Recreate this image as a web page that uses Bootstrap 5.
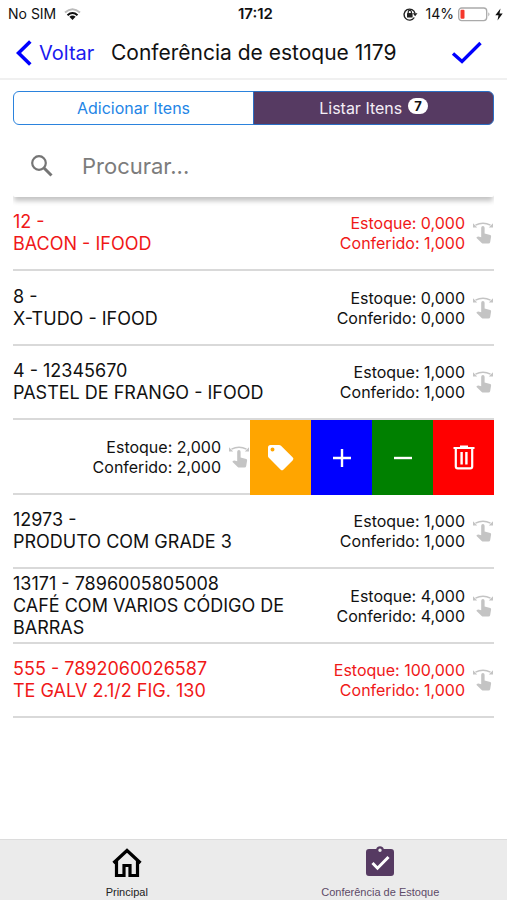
<!DOCTYPE html>
<html lang="pt-BR">
<head>
<meta charset="utf-8">
<meta name="viewport" content="width=device-width, initial-scale=1">
<title>Conferência de estoque</title>
<link href="https://cdn.jsdelivr.net/npm/bootstrap@5.3.0/dist/css/bootstrap.min.css" rel="stylesheet">
<style>
  body { font-family: Inter, "Liberation Sans", sans-serif; color: #111; background: #fff; }
  svg { display: block; flex: none; }
  .status-bar { height: 28px; font-size: 14px; line-height: 28px; padding: 0 4px 0 8px; }
  .status-bar > * { flex: 1 1 0; }
  .clock { font-weight: 600; font-size: 15px; }
  .title-bar { height: 52px; padding: 0 24px 0 16px; border-bottom: 2px solid #f0f0f0; }
  .title-bar a { color: #1a1aef; font-size: 20px; width: 95px; gap: 7px; }
  .title-bar h1 { font-size: 21px; line-height: 28px; font-weight: 400; }
  .title-bar button { color: #00f; }
  .content { padding: 11px 13px 0; }
  .segments { height: 34px; }
  .segments .btn { font-size: 16px; line-height: 20px; padding: 0; flex: 1 1 0; border-color: #2b83dd; border-radius: 6px; color: #2385e6; }
  .segments .btn.active { background: #563a62; border-color: #2b6fc4; color: #f4eef6; }
  .segments .badge { font-size: 13px; line-height: 16px; padding: 0 6px; background: #fff; color: #111; top: -3px; margin-left: 6px; }
  .search-box { height: 72px; padding: 10px 16px 0; color: #757575; box-shadow: 0 5px 5px -1px #c4c4c4; clip-path: inset(0 0 -12px 0); border-radius: 2px; }
  .search-box input { font-size: 22px; line-height: 32px; margin-left: 27px; color: #333; outline: 0; min-width: 0; }
  .search-box input::placeholder { color: #7c7c7c; opacity: 1; }
  .stock-row { height: 74px; border-bottom: 2px solid #d9d9d9; }
  .stock-row:nth-child(even) { height: 75px; }
  .product { font-size: 18px; line-height: 22px; max-width: 290px; }
  .counts { font-size: 16px; line-height: 20px; margin-right: 7px; }
  .swipe-icon { color: #c4c4c4; }
  .different { color: #f01818; }
  .actions { margin-bottom: -2px; }
  .action { width: 61px; color: #fff; }
  .act-tag { background: #ffa500; }
  .act-plus { background: #00f; }
  .act-minus { background: #008000; }
  .act-trash { background: #f00; }
  .tab-bar { height: 61px; background: #ebebeb; border-top: 1px solid #dcdcdc; font-family: "Liberation Sans", sans-serif; font-size: 11px; line-height: 14px; }
  .tab-bar a { flex: 1 1 0; color: #222; padding-top: 5px; gap: 6px; }
  .tab-bar a.current { color: #5d4a68; }
</style>
</head>
<body class="d-flex flex-column min-vh-100">
<svg class="d-none" aria-hidden="true">
  <symbol id="swipe" viewBox="0 0 22 24">
    <path d="M3.5 4.2Q11 .2 18.500 4.200" fill="none" stroke="currentColor" stroke-width="1.500"/>
    <path d="M1 2.300V6.500H5.200ZM21 2.300V6.500H16.800Z" fill="currentColor"/>
    <path d="M9.200 6.700a1.700 1.700 0 0 1 3.400 0V12.400l5.600 1.600q1 .4.900 1.500l-.9 5.500q-.3 1.500-1.700 1.500h-5.400q-.8 0-1.400-.6L4.300 16.700l.8-.8q.5-.5 1.200-.3l2.900.6Z" fill="currentColor"/>
  </symbol>
</svg>

<div class="status-bar d-flex align-items-center">
  <div class="d-flex align-items-center gap-2">
    <span>No SIM</span>
    <svg width="17" height="13" viewBox="0 0 17 13" fill="none" stroke-width="2">
      <path d="M1 4.500Q8.500-2 16 4.500" stroke="#bbb"/><path d="M3.500 7.200Q8.500 2.800 13.500 7.200" stroke="#111"/><path d="M5.400 8.700Q8.500 6.200 11.600 8.700L8.500 12Z" fill="#111"/>
    </svg>
  </div>
  <div class="clock text-center">17:12</div>
  <div class="d-flex align-items-center justify-content-end">
    <svg class="me-2" width="15" height="14" viewBox="0 0 15 14">
      <path d="M11.300 10.500A5.500 5.500 0 1 1 12 6.500" fill="none" stroke="#222" stroke-width="1.400"/>
      <path d="M9.700 6.200h4.800L12.100 9.200Z" fill="#222"/><rect x="4" y="6" width="5.600" height="4.500" rx=".5" fill="#222"/><path d="M5.200 6V5a1.600 1.600 0 0 1 3.200 0v1" fill="none" stroke="#222" stroke-width="1.200"/>
    </svg>
    <span class="me-1">14%</span>
    <svg width="33" height="15" viewBox="0 0 33 15">
      <rect x=".7" y="1" width="28" height="12.600" rx="3" fill="#fff" stroke="#aaa" stroke-width="1.300"/><rect x="2.500" y="2.800" width="4" height="9" rx="1" fill="#f5372c"/><path d="M30.300 5.200q2.400 2 0 4.200Z" fill="#aaa"/>
    </svg>
    <svg class="ms-1" width="8" height="13" viewBox="0 0 8 13"><path d="M5.500.5.300 7.200H3.500L2.500 12.500 7.700 5.500H4.500Z" fill="#111"/></svg>
  </div>
</div>

<header class="title-bar d-flex align-items-center">
  <a href="#" class="d-flex align-items-center text-decoration-none">
    <svg width="16" height="26" viewBox="0 0 16 26"><path d="M14.300 1.500 2.500 13 14.300 24.500" fill="none" stroke="#00f" stroke-width="3.600"/></svg>
    <span>Voltar</span>
  </a>
  <h1 class="m-0 flex-grow-1 text-nowrap">Conferência de estoque 1179</h1>
  <button type="button" class="btn p-0 border-0" aria-label="Confirmar">
    <svg width="32" height="24" viewBox="0 0 32 24"><path d="M2 12.500 11 20.500 29.500 2" fill="none" stroke="#00f" stroke-width="3.400"/></svg>
  </button>
</header>

<main class="content flex-grow-1">
  <div class="segments btn-group d-flex" role="group" aria-label="Modo">
    <button type="button" class="btn">Adicionar Itens</button>
    <button type="button" class="btn active" aria-pressed="true">Listar Itens<span class="badge rounded-pill position-relative">7</span></button>
  </div>

  <div class="search-box d-flex align-items-center">
    <label for="search" aria-label="Procurar">
      <svg width="26" height="26" viewBox="0 0 26 26" fill="none" stroke="currentColor"><circle cx="10" cy="10" r="6.800" stroke-width="2.200"/><path d="M15 15 22.500 22.500" stroke-width="3"/></svg>
    </label>
    <input id="search" type="text" class="border-0 p-0 flex-grow-1 bg-transparent" placeholder="Procurar...">
  </div>

  <ul class="list-unstyled m-0">
    <li class="stock-row different d-flex align-items-center justify-content-between">
      <div class="product">12 -<br>BACON - IFOOD</div>
      <div class="d-flex align-items-center"><div class="counts text-end">Estoque: 0,000<br>Conferido: 1,000</div><svg class="swipe-icon" width="22" height="24"><use href="#swipe"/></svg></div>
    </li>
    <li class="stock-row d-flex align-items-center justify-content-between">
      <div class="product">8 -<br>X-TUDO - IFOOD</div>
      <div class="d-flex align-items-center"><div class="counts text-end">Estoque: 0,000<br>Conferido: 0,000</div><svg class="swipe-icon" width="22" height="24"><use href="#swipe"/></svg></div>
    </li>
    <li class="stock-row d-flex align-items-center justify-content-between">
      <div class="product">4 - 12345670<br>PASTEL DE FRANGO - IFOOD</div>
      <div class="d-flex align-items-center"><div class="counts text-end">Estoque: 1,000<br>Conferido: 1,000</div><svg class="swipe-icon" width="22" height="24"><use href="#swipe"/></svg></div>
    </li>
    <li class="stock-row d-flex justify-content-end">
      <div class="d-flex align-items-center"><div class="counts text-end">Estoque: 2,000<br>Conferido: 2,000</div><svg class="swipe-icon" width="22" height="24"><use href="#swipe"/></svg></div>
      <div class="actions d-flex">
        <button type="button" class="action act-tag border-0 p-0 d-flex align-items-center justify-content-center" aria-label="Etiqueta">
          <svg width="28" height="28" viewBox="0 0 28 28"><path fill-rule="evenodd" d="M3.500 1H12q1.200 0 2 .8L25.800 13.600q1.300 1.300 0 2.600L16.300 25.700q-1.300 1.300-2.600 0L1.800 13.800Q1 13 1 12V3.500Q1 1 3.500 1ZM5.500 3.500a2 2 0 1 0 0 4a2 2 0 1 0 0-4Z" fill="#fff"/></svg>
        </button>
        <button type="button" class="action act-plus border-0 p-0 d-flex align-items-center justify-content-center" aria-label="Adicionar">
          <svg width="20" height="20" viewBox="0 0 20 20"><path d="M10 1V19M1 10H19" stroke="#fff" stroke-width="2.400"/></svg>
        </button>
        <button type="button" class="action act-minus border-0 p-0 d-flex align-items-center justify-content-center" aria-label="Subtrair">
          <svg width="20" height="20" viewBox="0 0 20 20"><path d="M1 10H19" stroke="#fff" stroke-width="2.400"/></svg>
        </button>
        <button type="button" class="action act-trash border-0 p-0 d-flex align-items-center justify-content-center" aria-label="Excluir">
          <svg width="22" height="25" viewBox="0 0 22 25" fill="none" stroke="#fff" stroke-width="2.200"><path d="M.5 3H21.500M7 1.700H15M2.800 3V21.500Q2.800 23.400 4.700 23.400H17.300Q19.200 23.400 19.200 21.500V3"/><path d="M8.600 7V19.500M13.400 7V19.500" stroke-width="2.400"/></svg>
        </button>
      </div>
    </li>
    <li class="stock-row d-flex align-items-center justify-content-between">
      <div class="product">12973 -<br>PRODUTO COM GRADE 3</div>
      <div class="d-flex align-items-center"><div class="counts text-end">Estoque: 1,000<br>Conferido: 1,000</div><svg class="swipe-icon" width="22" height="24"><use href="#swipe"/></svg></div>
    </li>
    <li class="stock-row d-flex align-items-center justify-content-between">
      <div class="product">13171 - 7896005805008<br>CAFÉ COM VARIOS CÓDIGO DE BARRAS</div>
      <div class="d-flex align-items-center"><div class="counts text-end">Estoque: 4,000<br>Conferido: 4,000</div><svg class="swipe-icon" width="22" height="24"><use href="#swipe"/></svg></div>
    </li>
    <li class="stock-row different d-flex align-items-center justify-content-between">
      <div class="product">555 - 7892060026587<br>TE GALV 2.1/2 FIG. 130</div>
      <div class="d-flex align-items-center"><div class="counts text-end">Estoque: 100,000<br>Conferido: 1,000</div><svg class="swipe-icon" width="22" height="24"><use href="#swipe"/></svg></div>
    </li>
  </ul>
</main>

<nav class="tab-bar d-flex" aria-label="Principal">
  <a href="#" class="d-flex flex-column align-items-center text-decoration-none">
    <svg width="32" height="34" viewBox="0 0 32 34"><path d="M2.500 18 16 5.500 29.500 18M5.500 16V30.500H13V20.500H19V30.500H26.500V16" fill="none" stroke="#000" stroke-width="3.200"/></svg>
    <span>Principal</span>
  </a>
  <a href="#" class="current d-flex flex-column align-items-center text-decoration-none" aria-current="page">
    <svg width="32" height="34" viewBox="0 0 32 34"><path fill-rule="evenodd" d="M5 4H12.200A4 4 0 0 1 19.800 4H27Q30 4 30 7V28Q30 31 27 31H5Q2 31 2 28V7Q2 4 5 4ZM16 3.500a1.700 1.700 0 1 0 0 3.400a1.700 1.700 0 1 0 0-3.400Z" fill="#563a62"/><path d="M8.500 18 13.500 23.200 24.500 12" fill="none" stroke="#fff" stroke-width="3"/></svg>
    <span>Conferência de Estoque</span>
  </a>
</nav>
<script src="https://cdn.jsdelivr.net/npm/bootstrap@5.3.0/dist/js/bootstrap.bundle.min.js"></script>
</body>
</html>
